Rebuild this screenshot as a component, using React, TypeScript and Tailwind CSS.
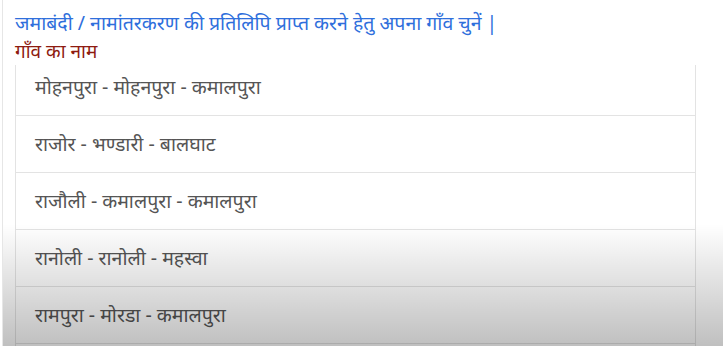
const villages = [
  "मोहनपुरा - मोहनपुरा - कमालपुरा",
  "राजोर - भण्डारी - बालघाट",
  "राजौली - कमालपुरा - कमालपुरा",
  "रानोली - रानोली - महस्वा",
  "रामपुरा - मोरडा - कमालपुरा",
];

export default function App() {
  return (
    <div
      className="relative h-[346px] w-[723px] overflow-hidden bg-white border-l border-[#e6e6e6] ml-[2px]"
      style={{ fontFamily: '"Noto Sans", "Noto Sans Devanagari", sans-serif' }}
    >
      <div className="pl-[12px] pt-[8px]">
        <p className="text-[19.5px] leading-[29px] text-[#2f6fdc]">
          जमाबंदी / नामांतरकरण की प्रतिलिपि प्राप्त करने हेतु अपना गाँव चुनें |
        </p>
        <p className="text-[19px] leading-[28px] text-[#8e1b10]">गाँव का नाम</p>
      </div>

      {/* list of villages */}
      <div className="ml-[12px] w-[681px] h-[300px] overflow-hidden border-x border-[#e3e3e3]">
        <div className="-mt-[6px]">
          {villages.map((v) => (
            <div
              key={v}
              className="h-[57px] flex items-center pl-[19px] border-b border-[#e3e3e3] text-[19.5px] text-[#555555]"
            >
              {v}
            </div>
          ))}
        </div>
      </div>

      {/* bottom shade */}
      <div className="absolute left-0 right-0 bottom-0 h-[122px] bg-gradient-to-b from-black/0 to-black/25 pointer-events-none" />
    </div>
  );
}
